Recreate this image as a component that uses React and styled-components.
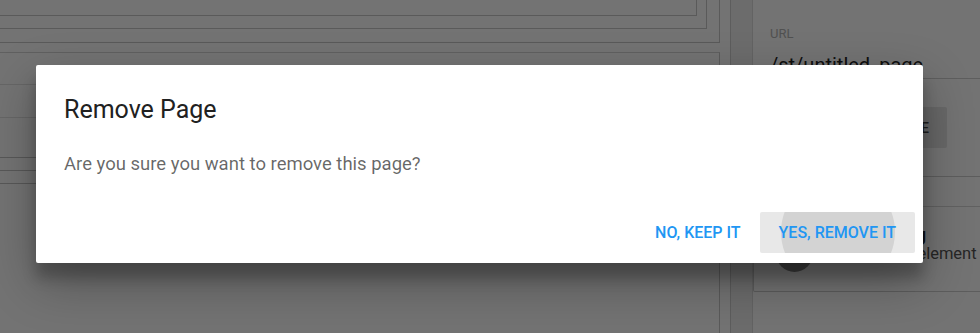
import React from "react";
import styled, { createGlobalStyle } from "styled-components";

const GlobalStyle = createGlobalStyle`
  html, body {
    margin: 0;
    padding: 0;
    background: #ffffff;
  }
  body {
    font-family: Roboto, "Noto Sans", "Liberation Sans", sans-serif;
  }
`;

const Page = styled.div`
  width: 980px;
  height: 333px;
  display: flex;
  overflow: hidden;
  position: relative;
  background: #ffffff;
`;

const Main = styled.div`
  width: 720px;
  flex-shrink: 0;
  padding-right: 10px;
  border-right: 1px solid #cfcfcf;
  display: flex;
  flex-direction: column;
`;

const Frame = styled.div`
  border-right: 1px solid #c8c8c8;
  border-bottom: 1px solid #c8c8c8;
  padding: 0 ${(p) => p.$inset}px ${(p) => p.$drop}px 0;
`;

const Innermost = styled.div`
  height: 15px;
  border-bottom: 1px solid #c8c8c8;
  border-right: 1px solid #c8c8c8;
`;

const Block = styled.div`
  margin-top: 9px;
  border-top: 1px solid #d6d6d6;
  border-right: 1px solid #c8c8c8;
  display: flex;
  flex-direction: column;
  flex: 1;
`;

const Row = styled.div`
  height: ${(p) => p.$h}px;
  border-bottom: 1px solid ${(p) => (p.$faint ? "#e2e2e2" : "#c4c4c4")};
`;

const Gutter = styled.div`
  width: 21px;
  flex-shrink: 0;
  background: #f0f0f0;
  border-right: 1px solid #dcdcdc;
`;

const Side = styled.div`
  width: 240px;
  flex-shrink: 0;
  display: flex;
  flex-direction: column;
`;

const Field = styled.div`
  padding: 26px 0 0 17px;
  height: 52px;
  border-bottom: 1px solid #d0d0d0;
`;

const FieldLabel = styled.div`
  font-size: 13px;
  color: #b4b4b4;
  line-height: 16px;
`;

const FieldValue = styled.div`
  font-size: 20px;
  color: #222;
  line-height: 26px;
  margin-top: 10px;
`;

const ButtonRow = styled.div`
  display: flex;
  justify-content: flex-end;
  align-items: flex-start;
  padding: 28px 46px 0 0;
  height: 98px;
  box-sizing: border-box;
  border-bottom: 1px solid #cfcfcf;
`;

const GreyButton = styled.div`
  height: 41px;
  padding: 0 18px;
  background: #e6e6e6;
  border-radius: 2px;
  display: flex;
  align-items: center;
  font-size: 14px;
  font-weight: 500;
  color: #444;
`;

const Section = styled.div`
  height: 29px;
  border-bottom: 1px solid #d8d8d8;
`;

const Card = styled.div`
  height: 84px;
  border: 1px solid #cfcfcf;
  border-top: none;
  display: flex;
  align-items: center;
  gap: 10px;
  padding-left: 22px;
  border-radius: 0 0 0 2px;
`;

const Avatar = styled.div`
  width: 37px;
  height: 37px;
  border-radius: 50%;
  background: #8a8a8a;
  margin-top: 8px;
  flex-shrink: 0;
`;

const CardText = styled.div`
  display: flex;
  flex-direction: column;
  white-space: nowrap;
  margin-bottom: 10px;
`;

const CardTitle = styled.div`
  font-size: 18px;
  font-weight: 700;
  color: #222;
  line-height: 20px;
`;

const CardSub = styled.div`
  font-size: 16.5px;
  color: #555;
  line-height: 18px;
`;

const Overlay = styled.div`
  position: absolute;
  inset: 0;
  background: rgba(0, 0, 0, 0.55);
  padding: 65px 0 0 36px;
`;

const Dialog = styled.div`
  width: 887px;
  height: 198px;
  box-sizing: border-box;
  background: #ffffff;
  border-radius: 2px;
  box-shadow: 0 19px 50px rgba(0, 0, 0, 0.3), 0 15px 14px rgba(0, 0, 0, 0.22);
  display: flex;
  flex-direction: column;
  padding: 29px 8px 10px 28px;
`;

const Title = styled.h3`
  margin: 0;
  font-size: 25px;
  font-weight: 400;
  line-height: 32px;
  color: #212121;
`;

const Message = styled.p`
  margin: 26px 0 0;
  font-size: 18.5px;
  line-height: 24px;
  color: rgba(0, 0, 0, 0.6);
`;

const Actions = styled.div`
  margin-top: auto;
  display: flex;
  justify-content: flex-end;
`;

const FlatButton = styled.button`
  position: relative;
  overflow: hidden;
  height: 41px;
  padding: 0 19px;
  border: none;
  border-radius: 2px;
  background: ${(p) => (p.$hover ? "#e8e8e8" : "transparent")};
  font-family: Roboto, "Noto Sans", "Liberation Sans", sans-serif;
  font-size: 16px;
  font-weight: 500;
  letter-spacing: 0;
  text-transform: uppercase;
  color: #2196f3;
  cursor: pointer;
`;

const Ripple = styled.span`
  position: absolute;
  width: 114px;
  height: 114px;
  border-radius: 50%;
  background: rgba(0, 0, 0, 0.09);
  left: 21px;
  top: -37px;
`;

const Label = styled.span`
  position: relative;
`;

export default function App() {
  return (
    <>
      <GlobalStyle />
      <Page>
        <Main>
          <Frame $inset={12} $drop={13}>
            <Frame $inset={9} $drop={12}>
              <Innermost />
            </Frame>
          </Frame>
          <Block>
            <Row $h={31} $faint />
            <Row $h={32} $faint />
            <Row $h={39} />
            <Row $h={12} />
            <Row $h={12} />
          </Block>
        </Main>
        <Gutter />
        <Side>
          <Field>
            <FieldLabel>URL</FieldLabel>
            <FieldValue>/st/untitled_page</FieldValue>
          </Field>
          <ButtonRow>
            <GreyButton>DELETE PAGE</GreyButton>
          </ButtonRow>
          <Section />
          <Card>
            <Avatar />
            <CardText>
              <CardTitle>Sub Heading</CardTitle>
              <CardSub>The heading element</CardSub>
            </CardText>
          </Card>
        </Side>
        <Overlay>
          <Dialog>
            <Title>Remove Page</Title>
            <Message>Are you sure you want to remove this page?</Message>
            <Actions>
              <FlatButton>No, keep it</FlatButton>
              <FlatButton $hover>
                <Ripple />
                <Label>Yes, remove it</Label>
              </FlatButton>
            </Actions>
          </Dialog>
        </Overlay>
      </Page>
    </>
  );
}
